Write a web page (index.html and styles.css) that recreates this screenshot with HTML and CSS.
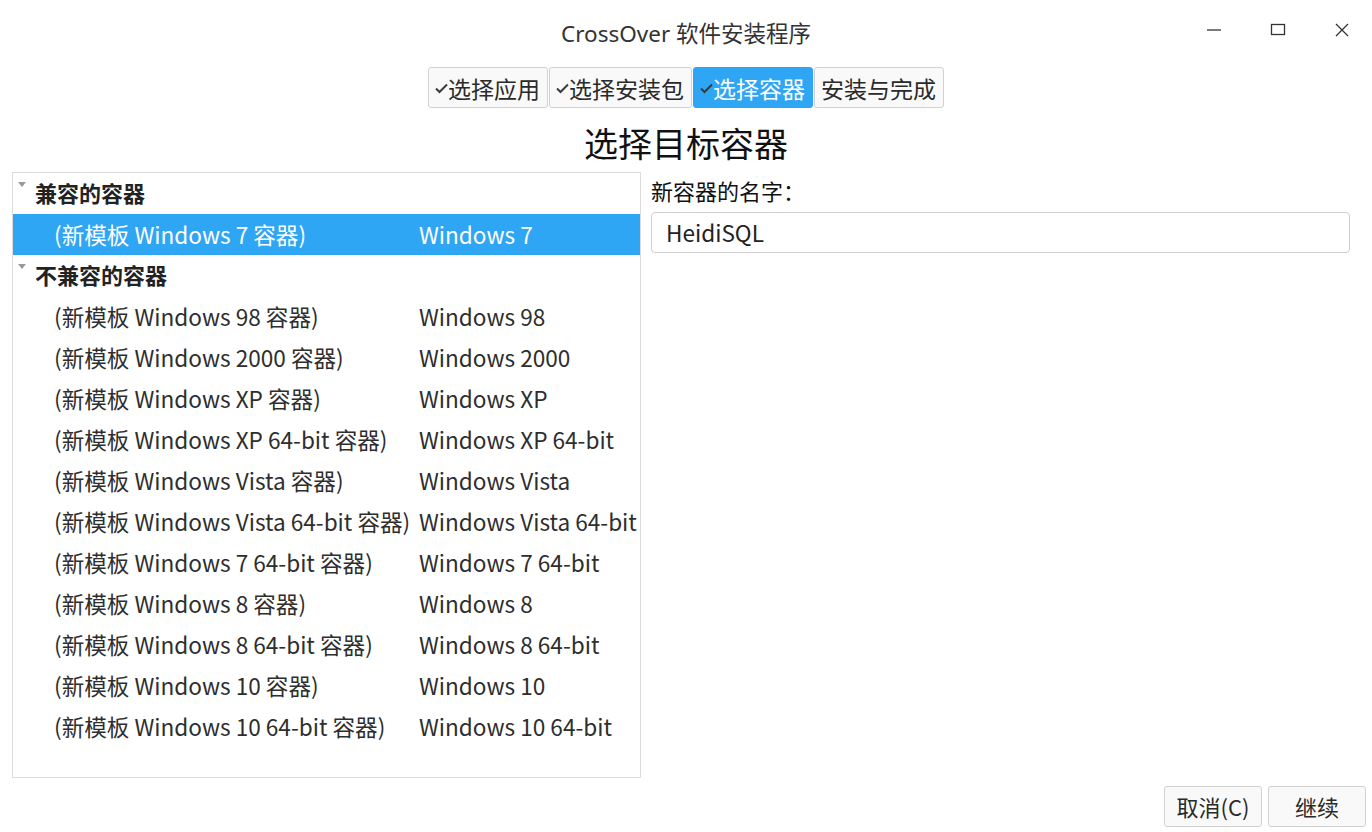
FILE: index.html
```html
<!DOCTYPE html>
<html lang="zh-CN">
    <head>
        <meta charset="UTF-8">
        <title>CrossOver 软件安装程序</title>
        <link rel="stylesheet" href="styles.css">
    </head>
    <body>
        <div class="titlebar">
            <div></div>
            <div class="title">CrossOver 软件安装程序</div>
            <div class="controls">
                <span class="ctl">
                    <svg width="16" height="16" viewBox="0 0 16 16"><path d="M1 8h14" stroke="#333" stroke-width="1.3" fill="none"/></svg>
                </span>
                <span class="ctl">
                    <svg width="16" height="16" viewBox="0 0 16 16"><rect x="1.5" y="2.5" width="13" height="10" stroke="#333" stroke-width="1.3" fill="none"/></svg>
                </span>
                <span class="ctl">
                    <svg width="16" height="16" viewBox="0 0 16 16"><path d="M2 2l12 12M14 2L2 14" stroke="#333" stroke-width="1.3" fill="none"/></svg>
                </span>
            </div>
        </div>

        <div class="steps">
            <div class="step"><span class="check"><svg width="13" height="11" viewBox="0 0 13 11"><path d="M1 5.5l3.5 3.5L12 1.5" stroke="#3a3a3a" stroke-width="2" fill="none"/></svg></span>选择应用</div>
            <div class="step"><span class="check"><svg width="13" height="11" viewBox="0 0 13 11"><path d="M1 5.5l3.5 3.5L12 1.5" stroke="#3a3a3a" stroke-width="2" fill="none"/></svg></span>选择安装包</div>
            <div class="step active"><span class="check"><svg width="13" height="11" viewBox="0 0 13 11"><path d="M1 5.5l3.5 3.5L12 1.5" stroke="#3a3a3a" stroke-width="2" fill="none"/></svg></span>选择容器</div>
            <div class="step">安装与完成</div>
        </div>

        <h1 class="heading">选择目标容器</h1>

        <div class="main">
            <div class="tree">
                <div class="group"><span class="arrow"></span><span class="group-text">兼容的容器</span></div>
                <div class="row selected"><span>(新模板 Windows 7 容器)</span><span>Windows 7</span></div>
                <div class="group"><span class="arrow"></span><span class="group-text">不兼容的容器</span></div>
                <div class="row"><span>(新模板 Windows 98 容器)</span><span>Windows 98</span></div>
                <div class="row"><span>(新模板 Windows 2000 容器)</span><span>Windows 2000</span></div>
                <div class="row"><span>(新模板 Windows XP 容器)</span><span>Windows XP</span></div>
                <div class="row"><span>(新模板 Windows XP 64-bit 容器)</span><span>Windows XP 64-bit</span></div>
                <div class="row"><span>(新模板 Windows Vista 容器)</span><span>Windows Vista</span></div>
                <div class="row"><span>(新模板 Windows Vista 64-bit 容器)</span><span>Windows Vista 64-bit</span></div>
                <div class="row"><span>(新模板 Windows 7 64-bit 容器)</span><span>Windows 7 64-bit</span></div>
                <div class="row"><span>(新模板 Windows 8 容器)</span><span>Windows 8</span></div>
                <div class="row"><span>(新模板 Windows 8 64-bit 容器)</span><span>Windows 8 64-bit</span></div>
                <div class="row"><span>(新模板 Windows 10 容器)</span><span>Windows 10</span></div>
                <div class="row"><span>(新模板 Windows 10 64-bit 容器)</span><span>Windows 10 64-bit</span></div>
            </div>
            <div class="side">
                <div class="label">新容器的名字：</div>
                <div class="input">HeidiSQL</div>
            </div>
        </div>

        <div class="footer">
            <div class="btn">取消(C)</div>
            <div class="btn">继续</div>
        </div>
    </body>
</html>
```

FILE: styles.css
```css
body {
    margin: 0;
    width: 1372px;
    height: 832px;
    overflow: hidden;
    background: #fff;
    color: #2e2e2e;
    font-family: "Noto Sans CJK SC", "Noto Sans", sans-serif;
}

/* 제목 표시줄 */
.titlebar {
    height: 64px;
    display: grid;
    grid-template-columns: 1fr auto 1fr;
    align-items: center;
}
.title {
    font-family: "Noto Sans", "Noto Sans CJK SC", sans-serif;
    font-size: 22.5px;
    color: #333;
}
.controls {
    display: flex;
    justify-content: flex-end;
    margin-right: -2px;
}
.ctl {
    width: 64px;
    height: 40px;
    display: flex;
    align-items: center;
    justify-content: center;
    margin-top: -4px;
}

/* 단계 버튼 */
.steps {
    margin-top: 3px;
    display: flex;
    justify-content: center;
    gap: 1px;
}
.step {
    height: 41px;
    box-sizing: border-box;
    padding: 0 7px 0 6px;
    display: flex;
    align-items: center;
    font-size: 23px;
    color: #2a2a2a;
    background: #f9f9f9;
    border: 1px solid #d2d2d2;
    border-radius: 3px;
}
.step.active {
    background: #2fa6f3;
    border-color: #2fa6f3;
    color: #fff;
}
.check {
    display: flex;
    margin-top: 2px;
}

.heading {
    margin: 0;
    height: 64px;
    box-sizing: border-box;
    padding-top: 5px;
    line-height: 59px;
    text-align: center;
    font-size: 34px;
    font-weight: normal;
    color: #111;
}

/* 본문 */
.main {
    height: 606px;
    display: flex;
    gap: 10px;
    padding: 0 22px 0 12px;
}
.tree {
    width: 629px;
    flex: none;
    box-sizing: border-box;
    border: 1px solid #dcdcdc;
}
.group {
    height: 41px;
    display: flex;
    align-items: center;
    font-size: 22px;
    font-weight: bold;
    color: #222;
}
.group-text {
    margin-top: -3px;
}
.arrow {
    align-self: flex-start;
    width: 0;
    height: 0;
    margin: 9px 9px 0 5px;
    border-left: 4px solid transparent;
    border-right: 4px solid transparent;
    border-top: 5px solid #9a9a9a;
}
.row {
    height: 41px;
    display: grid;
    grid-template-columns: 365px 1fr;
    align-items: center;
    padding-left: 41px;
    font-size: 22.6px;
    white-space: nowrap;
}
.row.selected {
    background: #2fa6f3;
    color: #fff;
}

.side {
    flex: 1;
}
.label {
    height: 40px;
    line-height: 36px;
    font-size: 22px;
    color: #111;
}
.input {
    height: 41px;
    box-sizing: border-box;
    border: 1px solid #cfcfcf;
    border-radius: 4px;
    padding-left: 14px;
    line-height: 39px;
    font-size: 22.6px;
    color: #222;
}

/* 하단 버튼 */
.footer {
    margin-top: 8px;
    display: flex;
    justify-content: flex-end;
    gap: 6px;
    padding-right: 6px;
}
.btn {
    width: 98px;
    height: 41px;
    box-sizing: border-box;
    border: 1px solid #d2d2d2;
    border-radius: 3px;
    background: #f9f9f9;
    text-align: center;
    line-height: 39px;
    font-size: 22px;
    color: #2a2a2a;
}
```
